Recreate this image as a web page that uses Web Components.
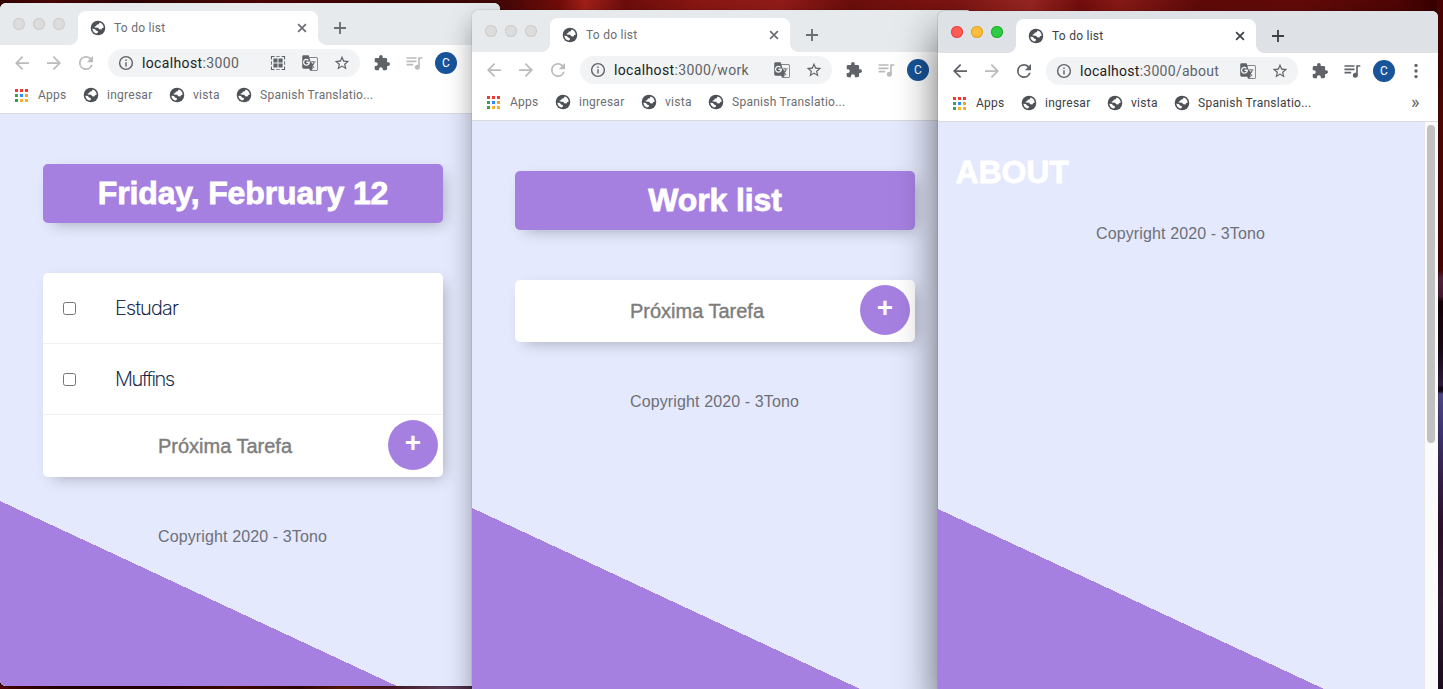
<!DOCTYPE html>
<html lang="en">
<head>
<meta charset="utf-8">
<title>To do list</title>
<style>
html,body{margin:0;height:100%;overflow:hidden}
body{font-family:"Liberation Sans",Arial,sans-serif}
</style>
</head>
<body>
<desk-top>
  <browser-window style="left:0;top:3px;z-index:1" path="" scan>
    <page-title>Friday, February 12</page-title>
    <todo-list>
      <todo-item>Estudar</todo-item>
      <todo-item style="letter-spacing:-1.4px">Muffins</todo-item>
    </todo-list>
    <page-footer></page-footer>
  </browser-window>
  <browser-window style="left:472px;top:10px;z-index:2" path="/work">
    <page-title>Work list</page-title>
    <todo-list></todo-list>
    <page-footer></page-footer>
  </browser-window>
  <browser-window style="left:938px;top:11px;z-index:3" path="/about" active>
    <page-title plain>ABOUT</page-title>
    <page-footer></page-footer>
  </browser-window>
</desk-top>

<script>
const define = (name, html, setup) => {
  const tpl = document.createElement('template');
  tpl.innerHTML = html;
  customElements.define(name, class extends HTMLElement {
    constructor() {
      super();
      this.attachShadow({mode: 'open'}).append(tpl.content.cloneNode(true));
    }
    connectedCallback() { if (setup) setup(this, this.shadowRoot); }
  });
};

const ICONS = {
  back: [21, '<path d="M20 11H7.83l5.59-5.59L12 4l-8 8 8 8 1.41-1.41L7.83 13H20v-2z"/>'],
  forward: [21, '<path d="M12 4l-1.41 1.41L16.17 11H4v2h12.17l-5.58 5.59L12 20l8-8z"/>'],
  reload: [21, '<path d="M17.65 6.35A7.96 7.96 0 0 0 12 4a8 8 0 1 0 7.73 10h-2.08A6 6 0 1 1 12 6c1.66 0 3.14.69 4.22 1.78L13 11h7V4l-2.35 2.35z"/>'],
  info: [17, '<path d="M11 7h2v2h-2zm0 4h2v6h-2zm1-9a10 10 0 1 0 0 20 10 10 0 0 0 0-20zm0 18a8 8 0 1 1 0-16 8 8 0 0 1 0 16z"/>'],
  star: [17.5, '<path d="M22 9.24l-7.19-.62L12 2 9.19 8.63 2 9.24l5.46 4.73L5.82 21 12 17.27 18.18 21l-1.63-7.03L22 9.24zM12 15.4l-3.76 2.27 1-4.28-3.32-2.88 4.38-.38L12 6.1l1.71 4.04 4.38.38-3.32 2.88 1 4.28L12 15.4z"/>'],
  puzzle: [17.5, '<path d="M20.5 11H19V7a2 2 0 0 0-2-2h-4V3.5a2.5 2.5 0 0 0-5 0V5H4a2 2 0 0 0-2 2v3.8h1.5a2.7 2.7 0 0 1 0 5.4H2V20c0 1.1.9 2 2 2h3.8v-1.5a2.7 2.7 0 0 1 5.4 0V22H17a2 2 0 0 0 2-2v-4h1.5a2.5 2.5 0 0 0 0-5z"/>'],
  music: [20, '<path d="M15 5H3v2h12V5zm0 4H3v2h12V9zM3 15h8v-2H3v2zM17 5v9.18c-.31-.11-.65-.18-1-.18a3 3 0 1 0 3 3V7h3V5h-5z"/>'],
  menu: [21, '<circle cx="12" cy="5.6" r="1.9"/><circle cx="12" cy="12" r="1.9"/><circle cx="12" cy="18.4" r="1.9"/>'],
  translate: [17, '<path d="M21 4H11l-1-3H3a2 2 0 0 0-2 2v15c0 1.1.9 2 2 2h8l1 3h9a2 2 0 0 0 2-2V6a2 2 0 0 0-2-2zM7 16a5 5 0 1 1 3.35-8.71L8.9 8.65A3 3 0 1 0 9.75 12H7v-2h4.9A5 5 0 0 1 7 16zm6.2-5h3.9a6 6 0 0 1-1.3 2.5l-.9-1.1zm8.8 10c0 .6-.4 1-1 1h-7l2-2-1-3.2 2.5 2.5.8-.8-2.4-2.6A8 8 0 0 0 18.500 11H20v-1h-3.500V9h-1v1h-2.900L11.300 5H21c.6 0 1 .4 1 1z"/>'],
  scan: [17, '<path d="M2 7V2h5v1.500H3.500V7zM17 2h5v5h-1.500V3.500H17zM2 17h1.500v3.500H7V22H2zM20.500 17H22v5h-5v-1.500h3.500zM9.500 2h5v1.300h-5zM9.500 20.700h5V22h-5zM2 9.500h1.300v5H2zM20.700 9.500H22v5h-1.300zM5.500 5.500h5.800v5.800H5.500zM12.700 5.500h5.800v5.800h-5.800zM5.500 12.700h5.800v5.800H5.500zM12.700 12.700h5.800v5.800h-5.800z"/>'],
  globe: [17.5, '<circle cx="12" cy="12" r="10"/><path fill="#fff" d="M14.200 4.400l-1.200 2.400-2.800.6-.6 1.900-2.400.9.300 1.200 4.600.4 1.700 2 2.800.2 1.300-2 1.900-.2A7.900 7.900 0 0 0 14.200 4.400zM4.200 13l3.600.5 1.500 1.900 2.700 1.200-.4 2-1.300 1.100A7.900 7.900 0 0 1 4.200 13z"/>'],
  close: [17, '<path d="M6.500 6.500l11 11M17.500 6.500l-11 11" stroke="currentColor" stroke-width="2.400"/>'],
  plus: [17, '<path d="M12 3.500v17M3.500 12h17" stroke="currentColor" stroke-width="2.600"/>']
};

// Every glyph sits in the same 24px canvas, so all of them share one pixel-aligned centre.
define('ui-icon', `<style>
:host{display:flex;flex:none;width:20px;height:20px;align-items:center;justify-content:center}
svg{flex:none;display:block;fill:currentColor}
</style>`, (el, root) => {
  const [size, body] = ICONS[el.getAttribute('name')];
  const side = 576 / size, origin = 12 - side / 2;
  root.innerHTML += `<svg width="24" height="24" viewBox="${origin} ${origin} ${side} ${side}">${body}</svg>`;
});

define('desk-top', `<style>
:host{display:block;position:relative;width:100vw;height:100vh;overflow:hidden;
background:
 linear-gradient(#4a0202 0,#650a06 120px,#5a0403 270px,#6a2c4c 278px,#5e2542 296px,#1c0008 302px,#200a1c 350px,#3d2250 385px,#18061c 388px,#18061c 391px,#6a60b0 394px,#55489a 430px,#4a2f68 470px,#3a1436 530px,#40203f 600px,#241026 689px) right/6px 100% no-repeat,
 linear-gradient(90deg,#5a0303 0,#330000 60px,#300000 160px,#5a0d04 230px,#40080a 300px,#742008 340px,#5e2030 390px,#80587c 445px,#5a3050 480px) bottom/100% 4px no-repeat,
 linear-gradient(90deg,#330202 0,#4c0705 50px,#2c0303 130px,#4f0504 260px,#3a0404 400px,#450808 500px,#720d0a 560px,#a22019 585px,#6e0d0c 625px,#8a1713 700px,#921c19 780px,#6c0e0c 850px,#7f1513 950px,#9a2622 1030px,#750e0d 1080px,#8a1a17 1120px,#620a09 1200px,#650b09 1300px,#500504 1400px,#300 1443px)}
</style><slot></slot>`);

define('book-mark', `<style>
:host{display:flex;align-items:center;gap:9px}
ui-icon{width:14px;color:#4d5156}
</style><ui-icon name="globe"></ui-icon><slot></slot>`);

define('browser-window', `<style>
:host{position:absolute;display:flex;flex-direction:column;width:500px;height:683px;border-radius:6px;background:#fff;
 box-shadow:0 0 1px rgba(0,0,0,.6),0 12px 26px rgba(0,0,0,.36);
 --strip:#e7eaed;--dim:#babbbd;--label:#6b6e72;--tool:#5f6368}
:host([active]){--strip:#dee1e6;--dim:#5f6368;--label:#3c4043;
 box-shadow:0 0 1px rgba(0,0,0,.8),0 20px 40px rgba(0,0,0,.6)}
.strip{display:flex;height:42px;background:var(--strip);border-radius:6px 6px 0 0;flex:none}
.lights{display:flex;gap:8px;padding:15px 0 0 13px;width:65px}
.lights i{width:12px;height:12px;border-radius:50%;background:#dcdcdc;box-shadow:inset 0 0 0 1px #cbcbcb}
:host([active]) .lights i:nth-child(1){background:#fc5b57;box-shadow:inset 0 0 0 1px #e2463f}
:host([active]) .lights i:nth-child(2){background:#fdbd3e;box-shadow:inset 0 0 0 1px #dfa023}
:host([active]) .lights i:nth-child(3){background:#2ecb44;box-shadow:inset 0 0 0 1px #1dad2b}
.tab{display:flex;align-items:center;box-sizing:border-box;width:240px;height:34px;margin-top:8px;padding:0 6px 0 10px;
 background:#fff;border-radius:8px 8px 0 0;position:relative;color:var(--label);font:12px Roboto,sans-serif;letter-spacing:.25px}
.tab::before,.tab::after{content:"";position:absolute;bottom:0;width:8px;height:8px}
.tab::before{left:-8px;background:radial-gradient(circle at 0 0,transparent 7.500px,#fff 8px)}
.tab::after{right:-8px;background:radial-gradient(circle at 100% 0,transparent 7.500px,#fff 8px)}
.tab span{flex:1;margin-left:6px}
.tab ui-icon:first-child{color:#4d5156}
.tab ui-icon:last-child,.new{color:var(--label)}
.new{margin:15px 0 0 12px}
.tools{display:flex;align-items:center;gap:12px;height:36px;padding-left:12px;color:var(--tool);flex:none}
.nav{color:var(--dim)}
.off{color:#babbbd}
.box{display:flex;align-items:center;box-sizing:border-box;width:252px;height:28px;border-radius:14px;background:#f1f3f4;padding:0 8px;gap:12px}
.url{flex:1;font:14px Roboto,sans-serif;letter-spacing:.36px;color:#5f6368;margin-left:-6px}
:host([active]) .url{letter-spacing:.27px}
.url b{font-weight:400;color:#202124}
.who{width:22px;height:22px;margin:0 -1px;border-radius:50%;background:#185499;color:#fff;font:12px/22px Roboto,sans-serif;text-align:center}
.marks{display:flex;align-items:center;height:28px;padding:0 0 4px 15px;border-bottom:1px solid #d8dade;box-sizing:content-box;
 color:var(--label);font:12px Roboto,sans-serif;letter-spacing:.26px;flex:none}
.grid{display:grid;grid-template-columns:repeat(3,3px);grid-auto-rows:3px;gap:2px;margin-right:10px}
.more{margin-left:auto;margin-right:18.500px;font-size:18px;letter-spacing:0;color:#5f6368;line-height:16px;padding-bottom:2px}
.view{flex:1;display:flex;min-height:0;border-radius:0 0 6px 6px;overflow:hidden;background:#e4e9fd}
.page{flex:1;display:flex;flex-direction:column;background:linear-gradient(25deg,#a680e1 167.700px,#e4e9fd 167.700px)}
.scroll{width:14px;box-sizing:border-box}
:host([active]) .scroll{background:#fafafa;border-left:1px solid #e8e8e8;padding:3px 3px 0 2px}
:host([active]) .scroll i{display:block;height:318px;width:8px;border-radius:4px;background:#c1c1c1}
</style>
<div class="strip"><div class="lights"><i></i><i></i><i></i></div>
<div class="tab"><ui-icon name="globe"></ui-icon><span>To do list</span><ui-icon name="close"></ui-icon></div>
<ui-icon class="new" name="plus"></ui-icon></div>
<div class="tools"><ui-icon class="nav" name="back"></ui-icon><ui-icon class="off" name="forward"></ui-icon><ui-icon class="nav" name="reload"></ui-icon>
<div class="box"><ui-icon name="info"></ui-icon><div class="url"><b>localhost</b><span></span></div><ui-icon class="scan" name="scan"></ui-icon><ui-icon name="translate"></ui-icon><ui-icon name="star"></ui-icon></div>
<ui-icon name="puzzle"></ui-icon><ui-icon class="nav" name="music"></ui-icon><div class="who">C</div><ui-icon class="last" name="menu"></ui-icon></div>
<div class="marks"><div class="grid"></div><span style="width:46px">Apps</span>
<book-mark style="width:86px">ingresar</book-mark><book-mark style="width:67px">vista</book-mark><book-mark>Spanish Translatio...</book-mark><span class="more">»</span></div>
<div class="view"><div class="page"><slot></slot></div><div class="scroll"><i></i></div></div>`, (el, root) => {
  root.querySelector('.url span').textContent = ':3000' + el.getAttribute('path');
  if (!el.hasAttribute('scan')) root.querySelector('.scan').remove();
  if (!el.hasAttribute('active')) root.querySelectorAll('.last,.more').forEach(n => n.remove());
  for (const c of ['#ee3a33', '#ee3a33', '#ee3a33', '#34a058', '#2f86f6', '#f0a52a', '#34a058', '#f9b02a', '#f9b02a']) {
    const dot = document.createElement('i');
    dot.style.background = c;
    root.querySelector('.grid').append(dot);
  }
});

define('page-title', `<style>
:host{display:block;box-sizing:border-box;width:400px;height:59px;margin:50px auto 0;background:#a680e1;border-radius:5px;
 box-shadow:5px 5px 15px -5px rgba(0,0,0,.3);color:#fff;text-align:center}
h1{margin:0;font-size:32px;line-height:59px;font-weight:700;letter-spacing:-.12px;-webkit-text-stroke:.8px #fff}
:host([plain]){background:none;box-shadow:none;text-align:left;width:auto;margin:21px 18px 0}
:host([plain]) h1{margin-left:-.5px}
</style><h1><slot></slot></h1>`);

define('todo-item', `<style>
:host{display:flex;align-items:center;height:70px;border-bottom:1px solid #f1f1f1;color:#00103a;font:200 20px Inter,sans-serif;letter-spacing:-.75px;-webkit-text-stroke:.2px #00103a}
input{margin:0 39px 0 20px;width:13px;height:13px}
</style><input type="checkbox"><span><slot></slot></span>`);

define('todo-list', `<style>
:host{display:block;width:400px;margin:50px auto 0;background:#fff;border-radius:5px;box-shadow:5px 5px 15px -5px rgba(0,0,0,.3)}
.add{display:flex;height:62px;box-sizing:border-box;padding:5px 5px 0 20px}
.hint{flex:1;text-align:center;font-size:20px;line-height:52px;color:#7d7d7d;-webkit-text-stroke:.4px #7d7d7d;padding-right:1px}
button{width:50px;height:50px;border:0;border-radius:50%;background:#a680e1;color:#fff;font:700 28px/46px "Liberation Sans",Arial,sans-serif;padding:0 0 4px}
</style><slot></slot><div class="add"><div class="hint">Próxima Tarefa</div><button>+</button></div>`);

define('page-footer', `<style>
:host{display:block;margin-top:50px;padding-right:1px;text-align:center;font-size:16px;line-height:19px;letter-spacing:.12px;color:#6e7079}
</style>Copyright 2020 - 3Tono`, (el) => {
  const prev = el.previousElementSibling;
  if (prev && prev.hasAttribute('plain')) el.style.marginTop = '22px';
});
</script>
</body>
</html>
